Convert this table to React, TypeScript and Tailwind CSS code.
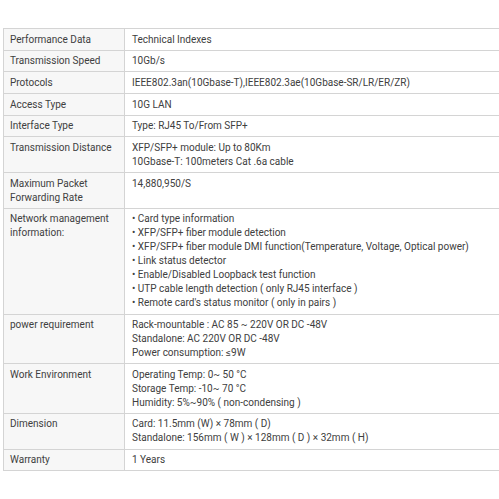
import React from "react";

const rows: [string[], string[]][] = [
  [["Performance Data"], ["Technical Indexes"]],
  [["Transmission Speed"], ["10Gb/s"]],
  [["Protocols"], ["IEEE802.3an(10Gbase-T),IEEE802.3ae(10Gbase-SR/LR/ER/ZR)"]],
  [["Access Type"], ["10G LAN"]],
  [["Interface Type"], ["Type: RJ45 To/From SFP+"]],
  [["Transmission Distance"], ["XFP/SFP+ module: Up to 80Km", "10Gbase-T: 100meters Cat .6a cable"]],
  [["Maximum Packet", "Forwarding Rate"], ["14,880,950/S"]],
  [
    ["Network management", "information:"],
    [
      "• Card type information",
      "• XFP/SFP+ fiber module detection",
      "• XFP/SFP+ fiber module DMI function(Temperature, Voltage, Optical power)",
      "• Link status detector",
      "• Enable/Disabled Loopback test function",
      "• UTP cable length detection ( only RJ45 interface )",
      "• Remote card's status monitor ( only in pairs )",
    ],
  ],
  [
    ["power requirement"],
    ["Rack-mountable : AC 85 ~ 220V OR DC -48V", "Standalone: AC 220V OR DC -48V", "Power consumption: ≤9W"],
  ],
  [
    ["Work Environment"],
    ["Operating Temp: 0~ 50 °C", "Storage Temp: -10~ 70 °C", "Humidity: 5%~90% ( non-condensing )"],
  ],
  [
    ["Dimension"],
    ["Card: 11.5mm (W) × 78mm ( D)", "Standalone: 156mm ( W ) × 128mm ( D ) × 32mm ( H)"],
  ],
  [["Warranty"], ["1 Years"]],
];

export default function App() {
  return (
    <div
      className="w-[499px] h-[499px] overflow-hidden bg-white pt-[28px] pl-[3px]"
      style={{ fontFamily: "Roboto, 'Liberation Sans', sans-serif" }}
    >
      <table className="border-collapse w-[520px] text-[10px] leading-[14px] text-[#404040]">
        <tbody>
          {rows.map(([l, r], i) => (
            <tr key={i}>
              <td className="w-[121px] align-top bg-[#f7f7f7] border border-[#d4d4d4] pl-[6px] pr-[4px] pt-[3.5px] pb-[3.2px]">
                {l.map((t, j) => (
                  <div key={j} className="whitespace-nowrap">{t}</div>
                ))}
              </td>
              <td className="align-top bg-white border border-[#d4d4d4] pl-[7px] pt-[3.5px] pb-[3.2px]">
                {r.map((t, j) => (
                  <div key={j} className="whitespace-nowrap">{t}</div>
                ))}
              </td>
            </tr>
          ))}
        </tbody>
      </table>
    </div>
  );
}
